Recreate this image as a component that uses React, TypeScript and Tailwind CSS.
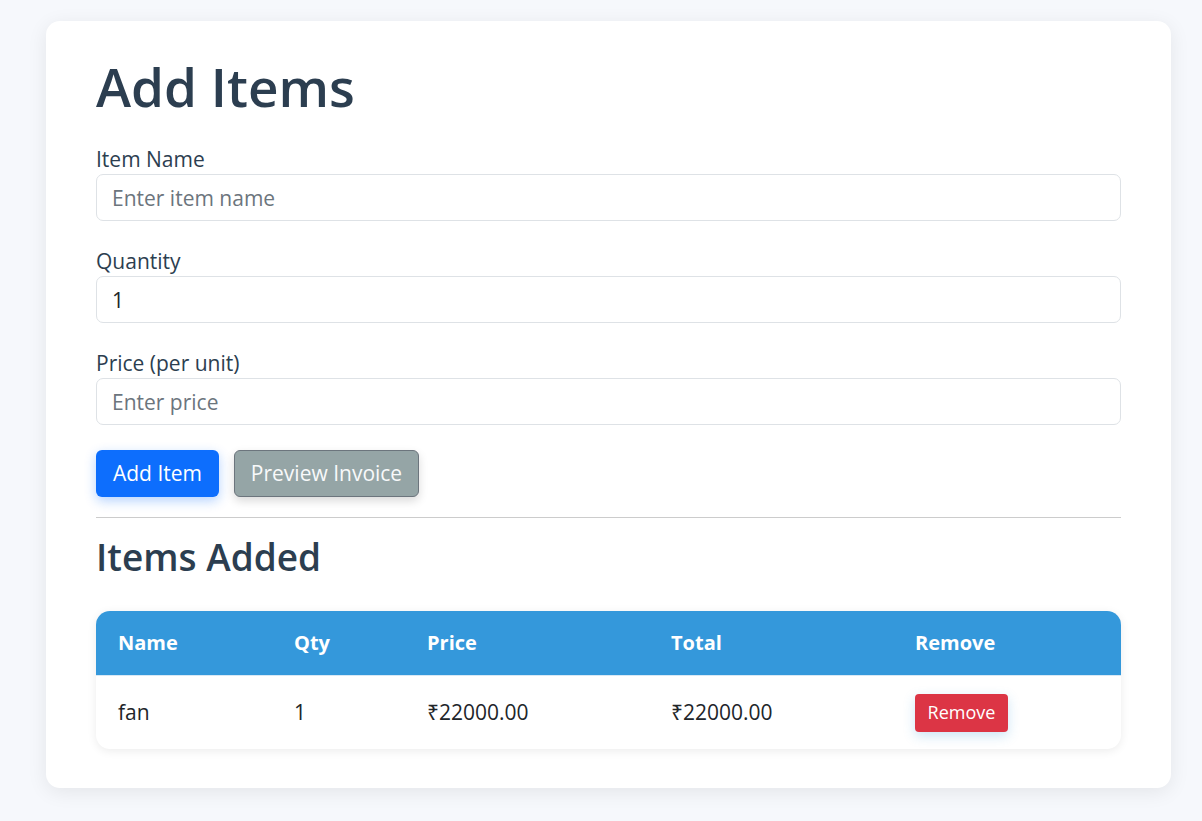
const font = { fontFamily: '"Open Sans", "Noto Sans", "DejaVu Sans", sans-serif' };

function Field({ label, placeholder, value }: { label: string; placeholder?: string; value?: string }) {
  return (
    <div className="flex flex-col">
      <label className="text-[21px] leading-[28px] text-[#2c3e50] mb-px">{label}</label>
      <input
        defaultValue={value}
        placeholder={placeholder}
        className="h-[47px] w-full rounded-[7px] border border-[#dee2e6] bg-white px-[15px] text-[21px] text-[#212529] placeholder:text-[#6c757d] outline-none"
      />
    </div>
  );
}

const cols = "grid grid-cols-[176px_133px_244px_244px_1fr]";

export default function App() {
  return (
    <div className="min-h-screen bg-[#f6f8fc] pt-[21px] pb-8" style={font}>
      <div className="ml-[46px] w-[1125px] rounded-[14px] bg-white px-[50px] pt-[34px] pb-[39px] shadow-[0_4px_20px_rgba(0,0,0,0.08)]">
        <h1 className="text-[53px] leading-[64px] font-semibold text-[#2c3e50]">Add Items</h1>

        <div className="mt-[26px] flex flex-col gap-[26px]">
          <Field label="Item Name" placeholder="Enter item name" />
          <Field label="Quantity" value="1" />
          <Field label="Price (per unit)" placeholder="Enter price" />
        </div>

        <div className="mt-[25px] flex gap-[15px]">
          <button className="h-[47px] w-[123px] rounded-[6px] bg-[#0d6efd] text-[21px] text-white shadow-[0_4px_12px_rgba(13,110,253,0.3)]">
            Add Item
          </button>
          <button className="h-[47px] w-[185px] rounded-[6px] border border-[#6c757d] bg-[#95a5a6] text-[21px] text-[#f8f9fa] shadow-[0_4px_10px_rgba(0,0,0,0.15)]">
            Preview Invoice
          </button>
        </div>

        <hr className="mt-[20px] border-t border-[#cccccc]" />

        <h2 className="mt-[17px] text-[37px] leading-[44px] font-semibold text-[#2c3e50]">Items Added</h2>

        <div className="mt-[32px] overflow-hidden rounded-[14px] bg-white shadow-[0_2px_10px_rgba(0,0,0,0.08)]">
          <div className={`${cols} h-[65px] items-center bg-[#3498db] border-b border-[#d7e8f5] text-[20px] font-bold text-white`}>
            {["Name", "Qty", "Price", "Total", "Remove"].map((h) => (
              <div key={h} className="px-[22px]">{h}</div>
            ))}
          </div>
          <div className={`${cols} h-[73px] items-center text-[21px] text-[#212529]`}>
            <div className="px-[22px]">fan</div>
            <div className="px-[22px]">1</div>
            <div className="px-[22px]">₹22000.00</div>
            <div className="px-[22px]">₹22000.00</div>
            <div className="px-[22px]">
              <button className="h-[38px] w-[93px] rounded-[4px] bg-[#dc3545] text-[18px] text-white shadow-[0_4px_12px_rgba(52,152,219,0.25)]">
                Remove
              </button>
            </div>
          </div>
        </div>
      </div>
    </div>
  );
}
